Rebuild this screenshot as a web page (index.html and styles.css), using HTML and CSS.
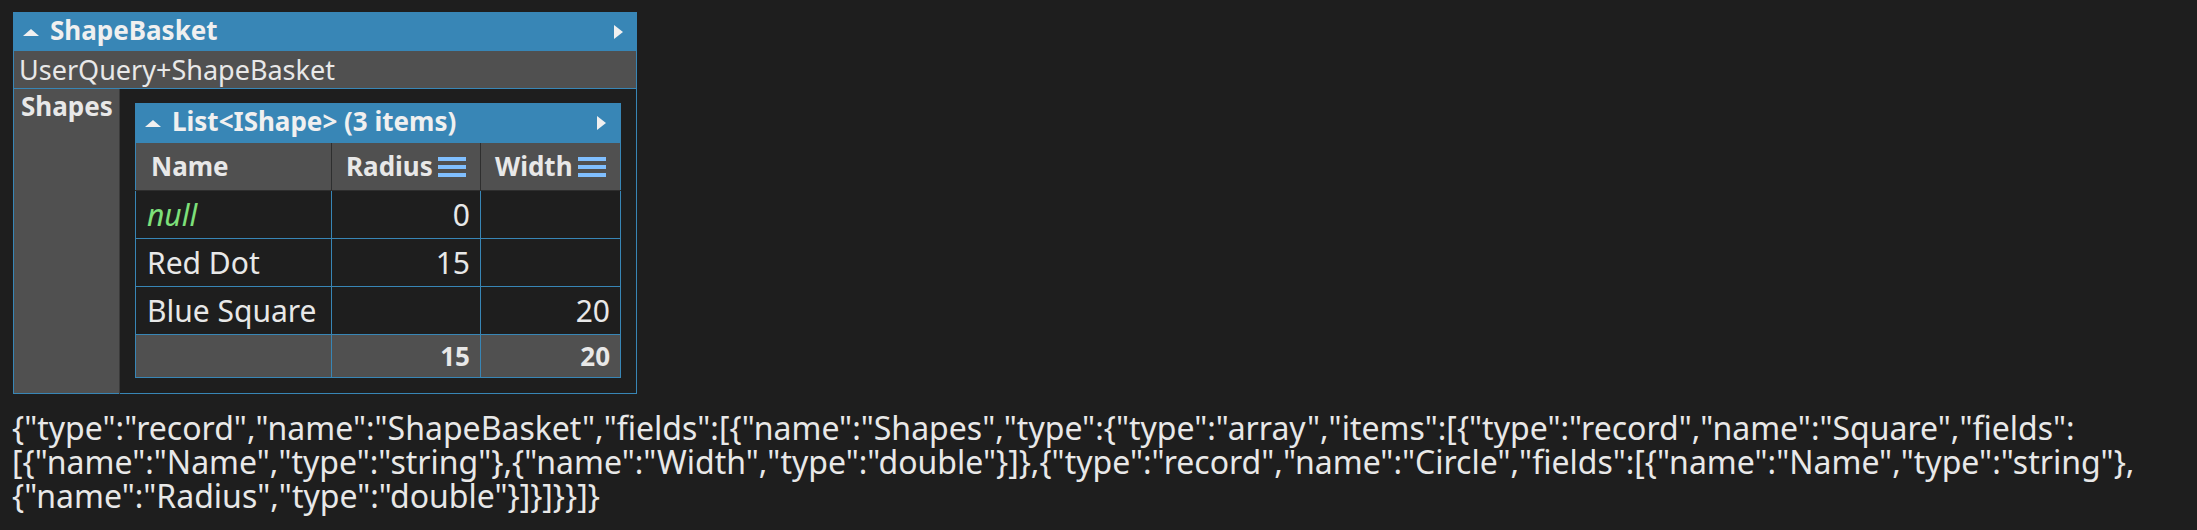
FILE: index.html
```html
<!DOCTYPE html>
<html lang="en">
<head>
    <meta charset="UTF-8">
    <title>ShapeBasket</title>
    <link rel="stylesheet" href="styles.css">
</head>
<body>
    <table class="dump">
        <tr>
            <td class="typeheader" colspan="2">
                <div class="headbar">
                    <span class="arrow-up"></span>
                    <span class="headtitle">ShapeBasket</span>
                    <span class="arrow-right"></span>
                </div>
            </td>
        </tr>
        <tr>
            <td class="typename" colspan="2">UserQuery+ShapeBasket</td>
        </tr>
        <tr>
            <th class="member">Shapes</th>
            <td class="value">
                <table class="list">
                    <colgroup>
                        <col class="c-name">
                        <col class="c-radius">
                        <col class="c-width">
                    </colgroup>
                    <tr>
                        <td class="typeheader" colspan="3">
                            <div class="headbar">
                                <span class="arrow-up"></span>
                                <span class="headtitle">List&lt;IShape&gt; (3 items)</span>
                                <span class="arrow-right"></span>
                            </div>
                        </td>
                    </tr>
                    <tr class="cols">
                        <th><div class="colhead">Name</div></th>
                        <th><div class="colhead">Radius<span class="menu"><i></i><i></i><i></i></span></div></th>
                        <th><div class="colhead">Width<span class="menu"><i></i><i></i><i></i></span></div></th>
                    </tr>
                    <tr>
                        <td><span class="null">null</span></td>
                        <td class="num">0</td>
                        <td class="num"></td>
                    </tr>
                    <tr>
                        <td>Red Dot</td>
                        <td class="num">15</td>
                        <td class="num"></td>
                    </tr>
                    <tr>
                        <td>Blue Square</td>
                        <td class="num"></td>
                        <td class="num">20</td>
                    </tr>
                    <tr class="totals">
                        <td></td>
                        <td class="num">15</td>
                        <td class="num">20</td>
                    </tr>
                </table>
            </td>
        </tr>
    </table>

    <p class="schema">{"type":"record","name":"ShapeBasket","fields":[{"name":"Shapes","type":{"type":"array","items":[{"type":"record","name":"Square","fields":[{"name":"Name","type":"string"},{"name":"Width","type":"double"}]},{"type":"record","name":"Circle","fields":[{"name":"Name","type":"string"},{"name":"Radius","type":"double"}]}]}}]}</p>
</body>
</html>
```

FILE: styles.css
```css
body {
    margin: 0;
    padding: 12px 13px;
    background: #1e1e1e;
    color: #e8e8e8;
    font-family: "Noto Sans", "Open Sans", sans-serif;
    font-size: 27px;
}
table {
    border-collapse: collapse;
    border-spacing: 0;
}
.dump {
    border: 1px solid #3886b6;
}
.typeheader {
    background: #3886b6;
    padding: 0;
    height: 38px;
}
.headbar {
    display: flex;
    align-items: center;
    height: 38px;
    padding: 0 13px 0 9px;
}
.headtitle {
    flex: 1;
    font-weight: bold;
    font-size: 26px;
    line-height: 34px;
    padding-bottom: 4px;
    color: #f0f0f0;
}
.arrow-up {
    width: 0;
    height: 0;
    border-left: 8px solid transparent;
    border-right: 8px solid transparent;
    border-bottom: 7px solid #f0f0f0;
    margin-right: 11px;
}
.arrow-right {
    width: 0;
    height: 0;
    border-top: 7px solid transparent;
    border-bottom: 7px solid transparent;
    border-left: 9px solid #f0f0f0;
}
.typename {
    background: #505050;
    border-bottom: 1px solid #3886b6;
    height: 37px;
    padding: 0 5px;
    line-height: 37px;
}
.member {
    background: #505050;
    border-right: 1px solid #3a3a3a;
    width: 98px;
    padding: 3px 0 0 7px;
    vertical-align: top;
    text-align: left;
    font-size: 26px;
    line-height: 28px;
}
.value {
    padding: 14px 15px 15px 15px;
    vertical-align: top;
}
.list {
    border: 1px solid #3886b6;
    table-layout: fixed;
    width: 485px;
}
.c-name {
    width: 196px;
}
.c-radius {
    width: 149px;
}
.c-width {
    width: 140px;
}
.list td {
    border: 1px solid #3886b6;
    height: 47px;
    padding: 0 10px 0 11px;
    font-size: 30px;
    line-height: 47px;
    white-space: nowrap;
}
.list td.typeheader {
    height: 38px;
    padding: 0;
    line-height: normal;
}
.list .typeheader .headbar {
    padding: 0 14px 0 9px;
}
.cols th {
    background: #505050;
    border-left: 1px solid #2e2e2e;
    border-bottom: 1px solid #2e2e2e;
    height: 47px;
    padding: 0 0 0 14px;
    text-align: left;
    font-size: 26px;
    line-height: 47px;
    white-space: nowrap;
}
.cols th:first-child {
    border-left: none;
    padding-left: 15px;
}
.colhead {
    display: flex;
    align-items: center;
}
.menu {
    display: flex;
    flex-direction: column;
    gap: 4px;
    margin: 0 0 0 5px;
}
.menu i {
    display: block;
    width: 28px;
    height: 4px;
    background: #80bfff;
}
.num {
    text-align: right;
}
.null {
    color: #7ee07a;
    font-style: italic;
}
.list .totals td {
    background: #505050;
    height: 42px;
    line-height: 42px;
    font-weight: bold;
    font-size: 26px;
}
.schema {
    margin: 17px 0 0 -1px;
    font-size: 32px;
    line-height: 34px;
}
```
